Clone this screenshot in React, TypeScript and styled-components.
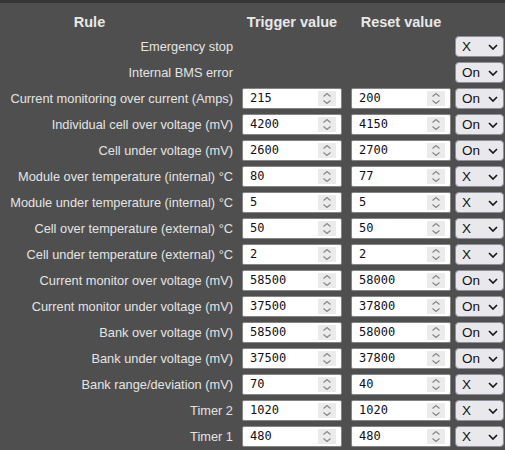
import React from "react";
import styled, { createGlobalStyle } from "styled-components";

const Global = createGlobalStyle`
  html, body { margin: 0; padding: 0; background: #4f4f4f; }
  body { font-family: "Liberation Sans", Arial, sans-serif; }
`;

const Page = styled.div`
  border-top: 3px solid #363636;
  background: #4f4f4f;
  min-height: 447px;
`;

const Grid = styled.div`
  display: grid;
  grid-template-columns: 233px 100px 100px 49px;
  column-gap: 9px;
  grid-auto-rows: 26px;
  padding-top: 4px;
  align-items: center;
`;

const Head = styled.div<{ $shift?: number }>`
  color: #e8e8e8;
  font-weight: bold;
  font-size: 14.5px;
  text-align: center;
  padding-top: 4px;
  padding-right: ${(p) => p.$shift ?? 0}px;
  white-space: nowrap;
`;

const Label = styled.div`
  color: #e4e4e4;
  font-size: 12.8px;
  text-align: right;
  white-space: nowrap;
`;

const NumBox = styled.div`
  box-sizing: border-box;
  width: 100px;
  height: 21px;
  display: flex;
  align-items: center;
  border: 1px solid #858585;
  border-radius: 2px;
  background: #fff;
  padding: 0 5px 0 7px;
`;

const NumText = styled.input`
  flex: 1;
  min-width: 0;
  border: none;
  padding: 0;
  margin: 0;
  background: transparent;
  font-family: "DejaVu Sans Mono", monospace;
  font-size: 12px;
  color: #101020;
  outline: none;
`;

const Spin = styled.div`
  width: 18px;
  height: 15px;
  background: #ebebeb;
  display: flex;
  flex-direction: column;
  align-items: center;
  justify-content: center;
  gap: 3px;
`;

const Cell = styled.div<{ $gap?: number }>`
  display: flex;
  justify-content: flex-start;
  margin-left: ${(p) => p.$gap ?? 0}px;
`;

const SelWrap = styled.div`
  position: relative;
  width: 49px;
  height: 21px;
`;

const Select = styled.select`
  appearance: none;
  -webkit-appearance: none;
  box-sizing: border-box;
  width: 49px;
  height: 21px;
  margin: 0;
  padding: 0 0 0 6px;
  border: 1px solid #8f8f9d;
  border-radius: 4px;
  background: #e9e9ed;
  font-family: "Liberation Sans", Arial, sans-serif;
  font-size: 13.5px;
  color: #111;
  outline: none;
`;

const Chevron = styled.svg`
  position: absolute;
  right: 6px;
  top: 8px;
  pointer-events: none;
`;

function Number({ value }: { value: string }) {
  return (
    <NumBox>
      <NumText type="text" inputMode="numeric" defaultValue={value} />
      <Spin>
        <svg width="8" height="4" viewBox="0 0 8 4">
          <path d="M0.5 3.5 L4 0.5 L7.5 3.5" fill="none" stroke="#858585" strokeWidth="1.1" />
        </svg>
        <svg width="8" height="4" viewBox="0 0 8 4">
          <path d="M0.5 0.5 L4 3.5 L7.5 0.5" fill="none" stroke="#858585" strokeWidth="1.1" />
        </svg>
      </Spin>
    </NumBox>
  );
}

function Toggle({ on }: { on: boolean }) {
  return (
    <SelWrap>
      <Select defaultValue={on ? "On" : "X"}>
        <option value="X">X</option>
        <option value="On">On</option>
      </Select>
      <Chevron width="10" height="6" viewBox="0 0 10 6">
        <path d="M1 1 L5 5 L9 1" fill="none" stroke="#1a1a1a" strokeWidth="1.7" />
      </Chevron>
    </SelWrap>
  );
}

type Row = { label: string; t?: string; r?: string; on: boolean };

const rows: Row[] = [
  { label: "Emergency stop", on: false },
  { label: "Internal BMS error", on: true },
  { label: "Current monitoring over current (Amps)", t: "215", r: "200", on: true },
  { label: "Individual cell over voltage (mV)", t: "4200", r: "4150", on: true },
  { label: "Cell under voltage (mV)", t: "2600", r: "2700", on: true },
  { label: "Module over temperature (internal) °C", t: "80", r: "77", on: false },
  { label: "Module under temperature (internal) °C", t: "5", r: "5", on: false },
  { label: "Cell over temperature (external) °C", t: "50", r: "50", on: false },
  { label: "Cell under temperature (external) °C", t: "2", r: "2", on: false },
  { label: "Current monitor over voltage (mV)", t: "58500", r: "58000", on: true },
  { label: "Current monitor under voltage (mV)", t: "37500", r: "37800", on: true },
  { label: "Bank over voltage (mV)", t: "58500", r: "58000", on: true },
  { label: "Bank under voltage (mV)", t: "37500", r: "37800", on: true },
  { label: "Bank range/deviation (mV)", t: "70", r: "40", on: false },
  { label: "Timer 2", t: "1020", r: "1020", on: false },
  { label: "Timer 1", t: "480", r: "480", on: false },
];

export default function App() {
  return (
    <Page>
      <Global />
      <Grid>
        <Head $shift={54}>Rule</Head>
        <Head>Trigger value</Head>
        <Head>Reset value</Head>
        <div />
        {rows.map((row, i) => (
          <React.Fragment key={i}>
            <Label>{row.label}</Label>
            <Cell>{row.t !== undefined && <Number value={row.t} />}</Cell>
            <Cell>{row.r !== undefined && <Number value={row.r} />}</Cell>
            <Cell $gap={-5}>
              <Toggle on={row.on} />
            </Cell>
          </React.Fragment>
        ))}
      </Grid>
    </Page>
  );
}
